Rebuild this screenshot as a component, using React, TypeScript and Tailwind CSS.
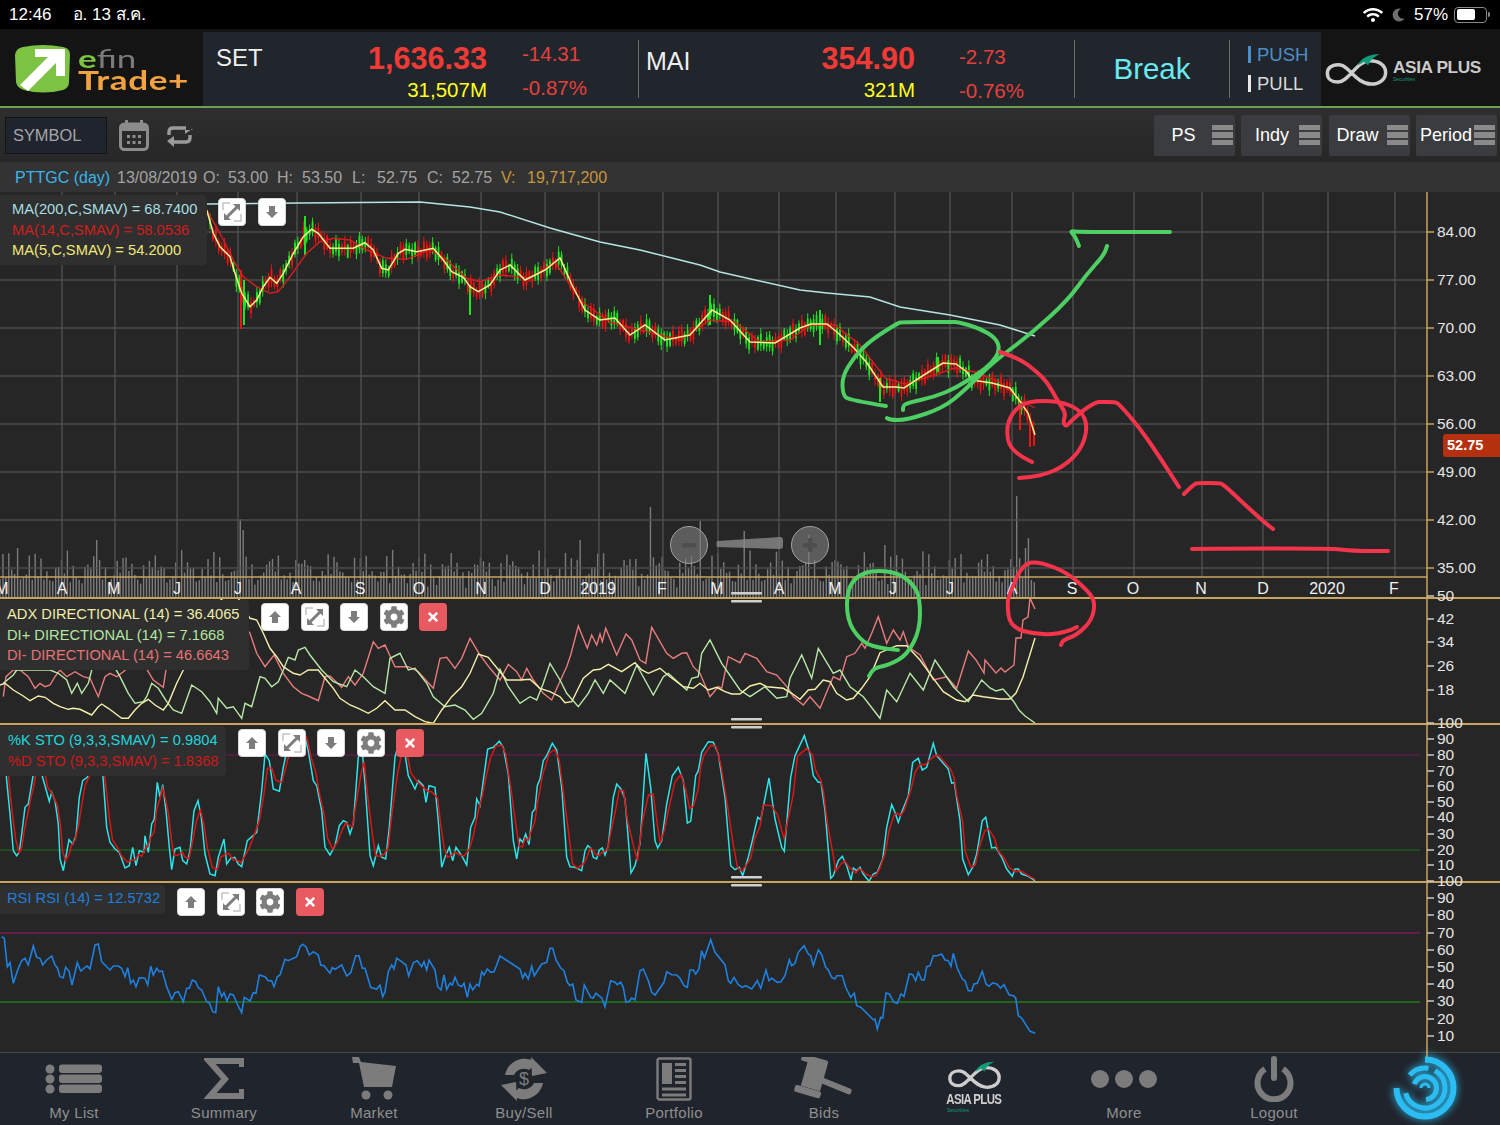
import { ReactNode } from "react";
import { FaCog, FaMoon, FaTimes, FaWifi } from "react-icons/fa";

type Pt = [number, number];

// chart data was read off zoomed crops, so each chunk carries its own origin/scale
const read = (s: string, ox: number, oy: number, sx = 3): Pt[] =>
  s
    .trim()
    .split(/\s+/)
    .map((p) => {
      const [x, y] = p.split(",").map(Number);
      return [x / sx + ox, y / 3 + oy] as Pt;
    });

const line = (pts: Pt[]) => pts.map((p) => p[0].toFixed(1) + "," + p[1].toFixed(1)).join(" ");

const smooth = (pts: Pt[]) => {
  let d = `M${pts[0][0]} ${pts[0][1]}`;
  for (let i = 1; i < pts.length - 1; i++) {
    const mx = (pts[i][0] + pts[i + 1][0]) / 2;
    const my = (pts[i][1] + pts[i + 1][1]) / 2;
    d += ` Q${pts[i][0]} ${pts[i][1]} ${mx} ${my}`;
  }
  const last = pts[pts.length - 1];
  return d + ` L${last[0]} ${last[1]}`;
};

const ma5: Pt[] = [
  ...read(
    "620,60 640,130 660,170 690,200 705,250 725,310 750,350 770,330 790,290 810,262 830,280 850,250 880,190 910,140 935,118 955,130 990,175 1030,175 1060,175 1095,158 1120,180 1145,235 1165,240 1195,190 1215,178 1250,185 1300,175 1330,210 1355,245 1390,262 1410,290 1435,305 1470,285 1500,240",
    0,
    190,
  ),
  [510, 265], [525, 280], [545, 270], [560, 258], [572, 285], [585, 310], [600, 320], [615, 318], [630, 335],
  [645, 325], [665, 340], [690, 335], [712, 310], [730, 320], [750, 342], [775, 343], [800, 328], [811, 324],
  [827, 324], [838, 333], [854, 348], [867, 363], [883, 387], [896, 387], [904, 388], [927, 373], [943, 363],
  [956, 364], [967, 372], [972, 380], [992, 383], [1010, 388], [1019, 400], [1028, 413], [1035, 435],
];

const ma14: Pt[] = [
  ...read(
    "620,60 660,130 700,210 730,260 770,290 810,310 835,305 870,260 920,190 960,155 1000,145 1050,150 1100,180 1160,205 1220,208 1290,178 1340,210 1400,265 1440,275 1500,255",
    0,
    190,
  ),
  [530, 278], [555, 262], [580, 300], [610, 322], [640, 330], [680, 340], [710, 320], [735, 322], [760, 342],
  [790, 340], [810, 325], [835, 325], [860, 345], [885, 378], [905, 384], [925, 378], [955, 368], [975, 372],
  [1000, 382], [1020, 400], [1035, 408],
];

const ma200: Pt[] = [
  [207, 204], [300, 203], [420, 202], [470, 207], [500, 212], [550, 228], [600, 242], [640, 250], [700, 265],
  [720, 272], [800, 290], [827, 293], [870, 297], [900, 307], [950, 315], [1000, 325], [1035, 336],
];

const adxCream: Pt[] = [
  ...read(
    "0,345 15,340 40,360 70,378 90,392 115,378 135,382 160,400 180,410 205,418 220,415 240,418 275,435 295,410 305,402 325,415 345,430 365,445 385,445 405,420 425,400 445,388 465,405 490,420 505,400 530,340 550,300 600,180 650,100 700,60 750,145 770,150 790,190 810,235 830,260 850,290 880,310 900,315 925,300 955,300 975,325 1000,355 1020,385 1050,405 1075,415 1105,430 1130,415 1155,392 1185,420 1215,420 1245,440 1275,455 1300,460 1325,420 1355,380 1385,350 1410,310 1435,252 1465,262",
    0,
    570,
  ),
  ...read(
    "0,575 20,600 60,600 90,598 120,625 150,635 180,650 195,668 215,665 250,595 280,570 300,568 325,553 365,575 405,548 425,570 445,580 480,565 510,590 550,620 580,625 600,610 625,630 650,622 675,635 695,642 720,642 750,618 780,610 800,620 850,625 875,640 900,658 925,630 945,628 970,600 990,605 1010,640 1040,660 1060,655 1085,625 1110,590 1140,518 1190,497 1220,497 1260,540 1300,595 1330,635 1370,660 1395,665 1420,645 1450,650 1500,657",
    500,
    480,
  ),
  [1010, 699], [1016, 693], [1023, 677], [1035, 638],
];

const adxPink: Pt[] = [
  ...read(
    "10,380 18,320 40,300 60,300 85,320 105,355 120,340 135,350 150,345 165,320 180,300 200,320 225,305 250,320 270,325 295,380 315,320 330,310 350,320 370,305 400,280 430,280 460,330 490,352 497,305 520,200 600,100 700,120 750,190 770,250 795,290 822,255 850,310 880,350 905,370 925,378 955,392 975,320 990,318 1025,352 1045,320 1065,345 1090,310 1120,215 1135,235 1155,225 1185,290 1225,290 1255,305 1300,355 1320,265 1340,262 1365,295 1385,265 1410,205 1440,255 1470,295",
    0,
    570,
  ),
  ...read(
    "0,600 25,553 50,575 65,600 80,565 100,600 130,640 155,660 175,615 200,560 212,525 235,438 262,505 275,465 290,495 300,462 307,485 317,445 350,525 378,462 395,480 420,540 437,550 455,442 500,520 520,535 545,520 560,518 580,560 600,580 630,650 655,620 665,625 685,530 720,548 735,520 770,535 800,575 830,585 865,625 880,650 910,675 930,650 960,685 985,625 1000,590 1020,600 1040,530 1065,520 1085,490 1095,505 1115,460 1135,410 1160,490 1180,450 1200,480 1210,455 1225,500 1260,525 1300,600 1340,590 1370,625 1405,513",
    500,
    480,
  ),
  [976, 660], [984, 673], [985, 660], [996, 673], [1001, 668], [1005, 672], [1014, 665], [1016, 638], [1021, 638],
  [1023, 620], [1028, 617], [1030, 598], [1035, 609],
];

const adxGreen: Pt[] = [
  ...read(
    "10,340 40,315 50,300 130,300 150,300 175,310 200,330 215,370 232,340 245,370 265,340 275,300 285,290 320,250 360,320 385,370 405,400 430,395 440,380 455,340 475,355 500,395 520,420 545,430 575,345 605,365 630,395 650,430 655,385 680,415 700,410 725,445 735,400 755,410 780,320 795,325 815,350 835,335 850,300 865,262 885,270 895,240 915,232 930,255 965,300 1000,335 1040,350 1065,300 1090,320 1120,350 1155,370 1170,265 1200,250 1225,300 1245,295 1280,340 1300,380 1335,410 1365,405 1395,420 1420,448 1445,430 1480,370",
    0,
    570,
  ),
  ...read(
    "0,568 25,620 60,670 90,650 110,660 130,610 150,550 180,600 200,640 235,680 265,640 285,600 310,640 330,600 375,640 410,555 460,645 490,590 505,580 560,630 575,595 595,590 605,520 630,480 665,550 720,630 750,650 795,620 830,655 860,650 870,595 905,525 935,595 955,505 1000,580 1020,570 1050,620 1090,650 1140,715 1160,630 1190,665 1230,580 1270,630 1305,540 1360,620 1405,665 1445,600",
    500,
    480,
  ),
  [990, 688], [996, 691], [1003, 689], [1010, 697], [1014, 702], [1019, 710], [1025, 716], [1035, 723],
];

const stoK: Pt[] = [
  ...read(
    "0,60 15,100 20,170 30,270 40,380 50,395 58,385 65,330 75,250 85,240 95,180 105,120 112,60 118,60 125,150 135,185 148,232 155,205 165,230 175,300 180,405 190,440 200,385 207,347 218,360 228,335 238,220 248,170 262,160 275,130 285,80 300,70 310,170 320,310 330,355 345,375 358,385 375,432 388,425 398,370 408,425 418,380 432,385 435,335 445,385 455,300 463,285 472,175 480,220 488,182 498,260 508,370 515,437 525,375 540,370 548,410 560,420 570,380 582,260 594,230 604,280 615,390 630,450 645,455 655,400 672,345 680,420 692,403 704,400 715,420 725,428 742,350 770,325 785,200 795,90 808,110 820,195 838,202 850,130 865,60 885,20 905,20 915,40 925,80 940,170 950,185 965,260 975,370 990,393 1005,365 1018,305 1030,290 1040,295 1050,330 1060,300 1075,100 1085,60 1095,180 1110,395 1120,425 1135,365 1145,400 1157,405 1168,310 1185,100 1200,40 1215,90 1225,155 1245,195 1255,170 1270,185 1278,235 1287,185 1305,190 1315,290 1325,430 1335,400 1348,370 1358,410 1368,370 1385,395 1400,423 1412,310 1425,280 1430,225 1440,245 1450,170 1463,75 1480,70 1498,52 1510,70 1525,150 1540,350 1550,405",
    0,
    724,
  ),
  ...read(
    "0,345 8,355 17,330 27,362 37,265 45,255 52,185 60,165 70,110 80,95 97,58 110,78 125,190 140,400 150,428 165,430 185,440 195,380 203,365 213,373 220,400 230,405 238,378 247,372 255,393 265,365 280,220 290,180 303,195 315,225 333,447 345,425 360,360 378,88 392,190 405,350 413,372 425,350 440,240 457,155 475,130 490,170 502,297 512,292 527,155 535,140 545,85 565,53 580,55 595,90 615,220 632,425 645,437 658,430 668,455 685,400 697,350 713,280 722,287 747,162 765,285 785,370 793,382 812,160 825,95 853,35 870,90 880,155 895,175 903,175 915,260 932,463 940,455 955,410 967,397 980,425 993,468 1000,432 1010,440 1020,430 1030,450 1047,472 1060,450 1072,445 1088,405 1100,310 1115,242 1125,265 1135,295 1145,265 1165,215 1178,115 1195,103 1207,138 1220,130 1240,58 1250,95 1285,135 1295,178 1303,175 1320,290 1328,405 1345,452 1358,430 1370,390 1387,290 1397,280 1415,372 1427,370 1445,400 1460,435 1477,457 1485,435 1495,435 1505,450 1525,457 1545,470",
    520,
    724,
  ),
];

// %D is just %K lagged and averaged
const stoD: Pt[] = stoK.map((p, i) => {
  const a = stoK[Math.max(0, i - 1)];
  const b = stoK[Math.min(stoK.length - 1, i + 1)];
  return [Math.min(p[0] + 2.5, 1035), (a[1] + p[1] + b[1]) / 3] as Pt;
});

const rsi: Pt[] = [
  ...read(
    "5,200 13,205 22,290 30,278 40,340 55,295 65,272 75,265 85,285 100,228 110,262 120,265 128,285 140,270 155,258 165,285 172,293 180,320 190,323 197,292 207,303 216,345 232,278 242,303 255,292 262,288 270,297 285,225 295,222 305,275 330,300 340,288 355,288 365,295 375,320 383,293 392,340 400,330 408,350 418,323 435,325 443,345 452,288 460,315 470,295 478,305 487,303 500,350 515,388 525,368 535,365 550,395 560,355 568,355 577,330 587,335 595,353 605,360 620,395 628,398 638,425 647,428 655,350 665,380 672,368 681,393 690,372 700,375 713,405 725,428 733,382 750,393 760,368 768,370 778,315 795,320 805,332 815,332 822,350 832,320 840,315 855,268 865,272 890,260 900,230 908,223 918,230 928,255 940,245 955,255 962,285 972,287 990,310 997,293 1005,298 1025,285 1040,318 1052,308 1067,257 1077,257 1087,295 1095,295 1112,352 1130,358 1140,345 1148,380 1155,365 1165,305 1175,285 1182,297 1190,265 1205,275 1218,285 1226,318 1240,278 1252,272 1265,290 1272,275 1280,300 1287,270 1305,300 1313,350 1323,360 1332,315 1340,358 1350,340 1357,345 1365,322 1375,345 1385,350 1392,340 1402,382 1410,342 1418,360 1430,343 1437,348 1445,305 1452,315 1462,297 1472,307 1482,305 1490,285 1500,258",
    0,
    870,
  ),
  ...read(
    "0,735 8,762 15,748 25,765 35,727 43,755 65,720 80,715 90,673 98,673 108,708 122,732 132,740 142,775 150,785 158,780 168,828 185,835 193,783 212,820 220,822 228,808 245,822 255,848 272,770 285,775 292,782 302,775 310,790 318,835 328,832 335,822 345,828 360,740 370,735 385,770 395,805 405,813 432,775 440,743 455,752 470,753 480,763 492,785 502,790 510,738 520,738 527,750 537,735 545,680 553,702 572,647 585,685 615,722 625,770 632,778 642,760 655,782 667,790 677,785 695,795 712,770 722,793 738,738 747,770 755,762 772,775 783,773 795,755 808,707 815,725 825,718 835,685 852,665 865,690 872,695 880,725 895,677 905,692 917,730 925,738 935,760 945,765 950,755 967,755 977,790 992,820 1003,808 1010,845 1022,850 1060,887 1065,885 1072,915 1082,880 1088,882 1098,807 1108,810 1122,835 1132,838 1143,810 1152,817 1168,750 1178,752 1187,770 1195,745 1205,768 1213,768 1220,728 1230,725 1240,695 1252,695 1265,690 1275,708 1285,710 1293,727 1300,688 1312,733 1327,765 1335,770 1345,800 1355,800 1362,780 1372,778 1387,742 1398,780 1407,787 1418,777 1430,780 1442,792 1452,782 1467,812 1480,815 1487,822 1495,875 1505,882 1530,922 1546,928",
    520,
    724,
  ),
];

const gridX = [62, 115, 177, 238, 297, 361, 419, 481, 545, 599, 663, 718, 779, 836, 895, 950, 1012, 1073, 1134, 1202, 1263, 1328, 1395];
const gridY = [232, 280, 328, 376, 424, 472, 520, 568];

const months: [string, number][] = [
  ["M", 2], ["A", 62], ["M", 114], ["J", 177], ["J", 238], ["A", 296], ["S", 360], ["O", 419], ["N", 481], ["D", 545],
  ["2019", 598], ["F", 662], ["M", 717], ["A", 779], ["M", 835], ["J", 893], ["J", 950], ["A", 1012], ["S", 1072],
  ["O", 1133], ["N", 1201], ["D", 1263], ["2020", 1327], ["F", 1394],
];

const axis: [string, number][] = [
  ["84.00", 232], ["77.00", 280], ["70.00", 328], ["63.00", 376], ["56.00", 424], ["49.00", 472], ["42.00", 520], ["35.00", 568],
  ["50", 596], ["42", 619], ["34", 642], ["26", 666], ["18", 690], ["100", 723],
  ["90", 739], ["80", 755], ["70", 771], ["60", 786], ["50", 802], ["40", 817], ["30", 834], ["20", 850], ["10", 865], ["100", 881],
  ["90", 898], ["80", 915], ["70", 933], ["60", 950], ["50", 967], ["40", 984], ["30", 1001], ["20", 1019], ["10", 1036],
];

const green: Pt[][] = [
  [[1079, 246], [1076, 238], [1072, 233], [1071, 231], [1077, 232], [1170, 232]],
  [[886, 406], [849, 400], [843, 395], [842, 377], [854, 357], [871, 340], [898, 323], [902, 322], [952, 322], [958, 322], [979, 328], [996, 338], [1000, 350], [992, 363], [979, 373], [956, 388], [934, 397], [907, 403], [903, 406], [903, 410]],
  [[887, 418], [889, 420], [907, 420], [943, 408], [965, 390], [992, 363], [1032, 333], [1068, 300], [1086, 275], [1104, 255], [1107, 246]],
  [[898, 650], [876, 648], [860, 640], [847, 620], [847, 590], [858, 575], [876, 570], [898, 573], [912, 583], [920, 597], [920, 630], [907, 655], [889, 665], [874, 668], [869, 676]],
];

const red: Pt[][] = [
  [[1000, 352], [1019, 358], [1037, 372], [1048, 383], [1057, 400], [1066, 413], [1063, 422], [1066, 427], [1072, 420], [1086, 408], [1097, 402], [1101, 402], [1115, 402], [1119, 404], [1139, 427], [1157, 453], [1179, 487]],
  [[1032, 462], [1010, 452], [1006, 427], [1014, 410], [1028, 401], [1059, 401], [1081, 410], [1088, 427], [1081, 450], [1063, 467], [1041, 476], [1019, 478]],
  [[1184, 494], [1194, 484], [1198, 483], [1218, 483], [1223, 484], [1242, 502], [1264, 522], [1273, 529]],
  [[1192, 549], [1327, 548], [1354, 551], [1388, 551]],
  [[1077, 627], [1066, 633], [1037, 635], [1010, 627], [1007, 603], [1010, 593], [1023, 563], [1041, 562], [1068, 573], [1090, 593], [1095, 603], [1092, 620], [1077, 635], [1063, 640], [1061, 645]],
];

const yAt = (pts: Pt[], x: number) => {
  for (let i = 1; i < pts.length; i++) {
    if (x <= pts[i][0]) {
      const t = (x - pts[i - 1][0]) / (pts[i][0] - pts[i - 1][0] || 1);
      return pts[i - 1][1] + t * (pts[i][1] - pts[i - 1][1]);
    }
  }
  return pts[pts.length - 1][1];
};

function Candles() {
  const out: ReactNode[] = [];
  let i = 0;
  for (let x = 210; x <= 1035; x += 2.93, i++) {
    const mid = yAt(ma5, x) + 3 * Math.sin(i * 2.3);
    const up = Math.sin(i * 1.1 + Math.cos(i * 0.37) * 2) > (x > 860 ? 0.55 : x < 238 ? 0.5 : -0.1);
    const len = 2.5 + 4 * Math.abs(Math.sin(i * 0.83));
    const wick = 1 + 4.5 * Math.abs(Math.cos(i * 1.37));
    const c = up ? "#1ee61e" : "#ee1212";
    out.push(
      <g key={i}>
        <line x1={x} x2={x} y1={mid - len - wick} y2={mid + len + wick} stroke={c} strokeWidth="1" />
        <rect x={x - 0.9} y={mid - len} width="1.8" height={len * 2} fill={c} />
      </g>,
    );
  }
  const spikes: [number, number, number, string][] = [
    [241, 270, 329, "#ee1212"], [244, 280, 325, "#1ee61e"], [470, 285, 315, "#1ee61e"], [305, 216, 255, "#1ee61e"],
    [710, 295, 325, "#1ee61e"], [820, 310, 345, "#1ee61e"], [880, 378, 402, "#1ee61e"], [938, 357, 372, "#1ee61e"],
    [1020, 400, 430, "#ee1212"], [1030, 420, 447, "#ee1212"], [1034, 430, 446, "#ee1212"],
  ];
  return (
    <>
      {out}
      {spikes.map(([x, a, b, c]) => (
        <line key={x} x1={x} x2={x} y1={a} y2={b} stroke={c} strokeWidth="2" />
      ))}
    </>
  );
}

function Volume() {
  const out: ReactNode[] = [];
  const spikes: Record<number, number> = { 6: 548, 33: 540, 82: 519, 83: 530, 198: 540, 222: 507, 239: 521, 254: 531, 302: 545, 347: 496, 350: 548, 351: 538, 276: 535 };
  for (let i = 0; i < 354; i++) {
    const h = 10 + 30 * Math.abs(Math.sin(i * 1.7) * Math.sin(i * 0.31 + 1)) + 9 * Math.abs(Math.cos(i * 4.1));
    const top = spikes[i] ?? 598 - h;
    out.push(<line key={i} x1={i * 2.93} x2={i * 2.93} y1={top} y2={598} stroke="#a0a0a0" strokeWidth="1.4" opacity="0.7" />);
  }
  return <>{out}</>;
}

function IconFrame({ children, className }: { children: ReactNode; className?: string }) {
  return (
    <div className={"w-[28px] h-[28px] rounded-[4px] border border-[#d8d8d8] bg-white flex items-center justify-center text-[#7d7d7d] " + (className ?? "")}>
      {children}
    </div>
  );
}

const UpBtn = () => (
  <IconFrame>
    <svg width="14" height="14" viewBox="0 0 14 14" fill="#7d7d7d">
      <path d="M7 1 L13 7 H10 V13 H4 V7 H1 Z" />
    </svg>
  </IconFrame>
);
const DownBtn = () => (
  <IconFrame>
    <svg width="14" height="14" viewBox="0 0 14 14" fill="#7d7d7d">
      <path d="M7 13 L1 7 H4 V1 H10 V7 H13 Z" />
    </svg>
  </IconFrame>
);
const ExpandBtn = () => (
  <IconFrame>
    <svg width="24" height="24" viewBox="0 0 24 24" fill="none">
      <path d="M3 10 V3 H10 M21 14 V21 H14" stroke="#c4c4c4" strokeWidth="1.5" />
      <path d="M6 18 L18 6" stroke="#7d7d7d" strokeWidth="3" />
      <path d="M13 4 H20 V11 Z M4 13 V20 H11 Z" fill="#7d7d7d" />
    </svg>
  </IconFrame>
);
const GearBtn = () => (
  <IconFrame>
    <FaCog className="w-[22px] h-[22px]" />
  </IconFrame>
);
const CloseBtn = () => (
  <div className="w-[28px] h-[28px] rounded-[4px] bg-[#e85a60] flex items-center justify-center text-white">
    <FaTimes className="w-[14px] h-[14px]" />
  </div>
);

function Legend({ className, rows }: { className: string; rows: [string, string][] }) {
  return (
    <div className={"absolute left-0 rounded-r-[4px] bg-[#2f2f2f] flex flex-col pl-[7px] " + className}>
      {rows.map(([t, c]) => (
        <div key={t} className="text-[14.7px] h-[20.5px] leading-[20.5px] whitespace-nowrap" style={{ color: c }}>
          {t}
        </div>
      ))}
    </div>
  );
}

function Hamburger() {
  return (
    <div className="flex flex-col gap-[2px] w-[21px]">
      <div className="h-[5px] bg-[#8a8a8a]" />
      <div className="h-[6px] bg-[#8a8a8a]" />
      <div className="h-[5px] bg-[#8a8a8a]" />
    </div>
  );
}

function ToolButton({ label, pad }: { label: string; pad: string }) {
  return (
    <div className="w-[81px] h-[41px] rounded-[2px] bg-[#3a3c3f] flex items-center justify-end pr-[2px]">
      <span className={"text-[18px] text-white " + pad}>{label}</span>
      <Hamburger />
    </div>
  );
}

function AsiaMark({ className, w }: { className: string; w: string }) {
  return (
    <svg viewBox="0 0 64 34" fill="none" className={className}>
      <path
        d="M13 12 C6 12 2 16 2 21 C2 27 7 30 13 30 C24 30 32 8 46 8 C56 8 62 13 62 20 C62 27 56 32 47 32 C36 32 28 21 22 16 C19 13 16 12 13 12 Z"
        stroke="#cdcdcd"
        strokeWidth={w}
      />
      <path d="M33 13 C37 5 45 1 56 1 C50 4 46 7 44 13 L40 9 Z" fill="#0f9b78" />
    </svg>
  );
}

function Tab({ label, children }: { label: string; children: ReactNode }) {
  return (
    <div className="w-[150px] flex flex-col items-center">
      <div className="h-[51px] flex items-center justify-center">{children}</div>
      <div className="text-[15px] leading-[18px] text-[#8f8f8f] tracking-[0.3px]">{label}</div>
    </div>
  );
}

function Arc({ r, from, to, w }: { r: number; from: number; to: number; w: number }) {
  const p = (a: number) => [32 + r * Math.sin((a * Math.PI) / 180), 32 - r * Math.cos((a * Math.PI) / 180)];
  const [x1, y1] = p(from);
  const [x2, y2] = p(to);
  return <path d={`M${x1} ${y1} A${r} ${r} 0 ${to - from > 180 ? 1 : 0} 1 ${x2} ${y2}`} stroke="#2bbdf2" strokeWidth={w} fill="none" />;
}

export default function App() {
  return (
    <div className="w-[1500px] h-[1125px] overflow-hidden flex flex-col bg-[#262626] font-['Liberation_Sans','Noto_Sans',sans-serif]">
      {/* status bar */}
      <div className="h-[29px] bg-black text-white text-[17px] flex items-center pl-[9px] pr-[10px]">
        <span>12:46</span>
        <span className="ml-[21px]">อ. 13 ส.ค.</span>
        <div className="ml-auto flex items-center">
          <FaWifi className="w-[20px] h-[16px]" />
          <FaMoon className="ml-[9px] w-[13px] h-[14px] text-[#6f6f6f]" />
          <span className="ml-[9px]">57%</span>
          <div className="ml-[6px] w-[33px] h-[16px] rounded-[4px] border border-[#8a8a8a] p-[1.5px]">
            <div className="w-[18px] h-full rounded-[2px] bg-white" />
          </div>
          <div className="ml-[1px] w-[2px] h-[5px] rounded-r bg-[#8a8a8a]" />
        </div>
      </div>

      {/* index header */}
      <div className="h-[79px] bg-[#141414] flex border-b-2 border-[#6f9f55] pt-[3px]">
        <div className="w-[203px] flex items-center pl-[15px]">
          <svg width="56" height="50" viewBox="0 0 56 50" className="shrink-0">
            <path d="M8 3 Q28 -1 48 3 Q55 4 55 11 L54 38 Q54 44 48 46 Q28 51 9 46 Q2 44 1 38 L0 11 Q1 4 8 3 Z" fill="#7cc243" />
            <path d="M20 5 H50 V32 H41 V19 L13 47 L5 41 L33 13 H20 Z" fill="#fff" />
          </svg>
          <div className="ml-[7px] flex flex-col font-['Lato',sans-serif]">
            <div className="text-[25px] h-[22px] leading-[22px] origin-left scale-x-[1.4]">
              <span className="text-[#7cc243] font-bold">e</span>
              <span className="text-[#7b7b7b]">fin</span>
            </div>
            <div className="text-[27px] h-[22px] leading-[22px] font-bold tracking-[0.5px] text-[#f2a340] whitespace-nowrap origin-left scale-x-[1.3]">Trade+</div>
          </div>
        </div>

        <div className="w-[1118px] bg-[#21252c] flex items-center">
          <div className="w-[436px] h-[58px] flex border-r border-[#6d6d6d] pl-[13px]">
            <div className="w-[100px] text-[24px] text-[#eeeeee] leading-[36px]">SET</div>
            <div className="w-[171px] flex flex-col items-end">
              <div className="text-[30.6px] leading-[36px] font-bold text-[#f03a36]">1,636.33</div>
              <div className="mt-[2px] text-[20.5px] leading-[24px] text-[#ffff1e]">31,507M</div>
            </div>
            <div className="ml-[35px] flex flex-col text-[20.5px] text-[#e5403c]">
              <div className="leading-[28px]">-14.31</div>
              <div className="mt-[6px] leading-[28px]">-0.87%</div>
            </div>
          </div>
          <div className="w-[436px] h-[58px] flex border-r border-[#6d6d6d] pl-[7px]">
            <div className="w-[100px] text-[25px] text-[#eeeeee] leading-[42px]">MAI</div>
            <div className="w-[169px] flex flex-col items-end">
              <div className="text-[30.6px] leading-[36px] font-bold text-[#f03a36]">354.90</div>
              <div className="mt-[2px] text-[20.5px] leading-[24px] text-[#ffff1e]">321M</div>
            </div>
            <div className="ml-[44px] flex flex-col text-[20.5px] text-[#e5403c]">
              <div className="leading-[34px]">-2.73</div>
              <div className="leading-[34px]">-0.76%</div>
            </div>
          </div>
          <div className="w-[155px] h-[58px] flex items-center justify-center border-r border-[#6d6d6d] text-[29.5px] leading-[56px] text-[#69eaf0]">Break</div>
          <div className="pl-[18px] flex flex-col text-[18.5px]">
            <div className="flex items-center h-[29px] text-[#4c8ec8]">
              <div className="w-[3px] h-[17px] bg-[#4c8ec8] mr-[6px]" />
              PUSH
            </div>
            <div className="flex items-center h-[29px] text-[#d8d8d8]">
              <div className="w-[3px] h-[17px] bg-[#e8e8e8] mr-[6px]" />
              PULL
            </div>
          </div>
        </div>

        <div className="flex-1 flex items-center pl-[4px]">
          <AsiaMark className="w-[63px] h-[33px] shrink-0" w="3.6" />
          <div className="ml-[5px] flex flex-col mt-[2px]">
            <span className="text-[17.3px] leading-[18px] font-bold text-[#c9c9c9] -tracking-[0.4px] whitespace-nowrap">ASIA PLUS</span>
            <span className="text-[5px] leading-[6px] text-[#0f9b78]">Securities</span>
          </div>
        </div>
      </div>

      {/* toolbar */}
      <div className="h-[54px] bg-linear-to-b from-[#2e2e2e] to-[#272727] flex items-center pl-[5px] pr-[3px]">
        <div className="w-[102px] h-[37px] bg-[#20242e] border border-[#141414] flex items-center pl-[7px] text-[16.4px] text-[#a6a6a6]">SYMBOL</div>
        <svg width="30" height="31" viewBox="0 0 30 31" className="ml-[12px]" fill="none">
          <rect x="1.5" y="4" width="27" height="25.5" rx="4" stroke="#8c8c8c" strokeWidth="3" />
          <rect x="1.5" y="4" width="27" height="7" rx="3" fill="#8c8c8c" />
          <rect x="6" y="0" width="3" height="6" fill="#8c8c8c" />
          <rect x="21" y="0" width="3" height="6" fill="#8c8c8c" />
          <path d="M8 15h3v3H8zM13.5 15h3v3h-3zM19 15h3v3h-3zM8 21h3v3H8zM13.5 21h3v3h-3zM19 21h3v3h-3z" fill="#8c8c8c" />
        </svg>
        <svg width="27" height="24" viewBox="0 0 27 24" className="ml-[17px]" fill="none">
          <path d="M3 12 V9 Q3 5 7 5 H20" stroke="#9a9a9a" strokeWidth="3.4" />
          <path d="M19 0 L27 7 H19 Z M19 0 V11 L26 6 Z" fill="#9a9a9a" />
          <path d="M24 12 V15 Q24 19 20 19 H7" stroke="#9a9a9a" strokeWidth="3.4" />
          <path d="M8 13 V24 L1 18 Z" fill="#9a9a9a" />
        </svg>
        <div className="ml-auto flex gap-[6.5px]">
          <ToolButton label="PS" pad="mr-[16px]" />
          <ToolButton label="Indy" pad="mr-[10px]" />
          <ToolButton label="Draw" pad="mr-[8px]" />
          <ToolButton label="Period" pad="mr-[2px]" />
        </div>
      </div>

      {/* quote line */}
      <div className="h-[30px] bg-[#333333] flex items-center pl-[15px] pt-[2px] text-[16px] text-[#a3a3a3] whitespace-nowrap">
        <span className="w-[102px] text-[#38b6ea]">PTTGC (day)</span>
        <span className="w-[86px]">13/08/2019</span>
        <span className="w-[25px]">O:</span>
        <span className="w-[49px]">53.00</span>
        <span className="w-[25px]">H:</span>
        <span className="w-[50px]">53.50</span>
        <span className="w-[25px]">L:</span>
        <span className="w-[50px]">52.75</span>
        <span className="w-[25px]">C:</span>
        <span className="w-[49px]">52.75</span>
        <span className="w-[26px] text-[#c9953c]">V:</span>
        <span className="text-[#c9953c]">19,717,200</span>
      </div>

      {/* chart stack */}
      <div className="relative flex-1 flex flex-col min-h-0">
        <div className="relative h-[407px] shrink-0 border-b-2 border-[#c9a55c]">
          <svg width="1500" height="405" viewBox="0 192 1500 405" className="block">
            <Volume />
            {gridX.map((x) => (
              <line key={x} x1={x} x2={x} y1={192} y2={577} stroke="#4d4d4d" strokeWidth="1.5" />
            ))}
            {gridY.map((y) => (
              <line key={y} x1={0} x2={1427} y1={y} y2={y} stroke="#4d4d4d" strokeWidth="1.5" />
            ))}
            <line x1={0} x2={1427} y1={577} y2={577} stroke="#c9a55c" strokeWidth="1.5" />
            <Candles />
            <polyline points={line(ma200)} fill="none" stroke="#b5e4e2" strokeWidth="1.5" />
            <polyline points={line(ma14)} fill="none" stroke="#d91c1c" strokeWidth="1.4" />
            <polyline points={line(ma5)} fill="none" stroke="#f8ee8a" strokeWidth="1.5" />
          </svg>
          <Legend
            className="top-[3px] w-[207px] h-[70px] pt-[4px] pl-[12px]"
            rows={[
              ["MA(200,C,SMAV) = 68.7400", "#a8dfe0"],
              ["MA(14,C,SMAV) = 58.0536", "#cf1d1d"],
              ["MA(5,C,SMAV) = 54.2000", "#efe878"],
            ]}
          />
          <div className="absolute top-[6px] left-[218px] flex gap-[12px]">
            <ExpandBtn />
            <DownBtn />
          </div>
        </div>

        <div className="relative h-[126px] shrink-0 border-b-2 border-[#c9a55c]">
          <svg width="1500" height="124" viewBox="0 599 1500 124" className="block">
            <polyline points={line(adxPink)} fill="none" stroke="#e87c7c" strokeWidth="1.4" />
            <polyline points={line(adxGreen)} fill="none" stroke="#b8e8a8" strokeWidth="1.4" />
            <polyline points={line(adxCream)} fill="none" stroke="#f5f0ac" strokeWidth="1.4" />
          </svg>
          <Legend
            className="top-[1px] w-[249px] h-[70px] pt-[4px]"
            rows={[
              ["ADX DIRECTIONAL (14) = 36.4065", "#efeca8"],
              ["DI+ DIRECTIONAL (14) = 7.1668", "#b2e6a2"],
              ["DI- DIRECTIONAL (14) = 46.6643", "#e57474"],
            ]}
          />
          <div className="absolute top-[4px] left-[261px] flex gap-[11.5px]">
            <UpBtn />
            <ExpandBtn />
            <DownBtn />
            <GearBtn />
            <CloseBtn />
          </div>
        </div>

        <div className="relative h-[158px] shrink-0 border-b-2 border-[#c9a55c]">
          <svg width="1500" height="156" viewBox="0 725 1500 156" className="block">
            <line x1={0} x2={1420} y1={755} y2={755} stroke="#5a1d49" strokeWidth="1.3" />
            <line x1={0} x2={1420} y1={850} y2={850} stroke="#1f5a1f" strokeWidth="1.3" />
            <polyline points={line(stoK)} fill="none" stroke="#2ce4ea" strokeWidth="1.5" />
            <polyline points={line(stoD)} fill="none" stroke="#dd1414" strokeWidth="1.5" />
          </svg>
          <Legend
            className="top-[1px] w-[226px] h-[50px] pt-[4px] pl-[8px]"
            rows={[
              ["%K STO (9,3,3,SMAV) = 0.9804", "#1fd6de"],
              ["%D STO (9,3,3,SMAV) = 1.8368", "#cf1818"],
            ]}
          />
          <div className="absolute top-[4px] left-[238px] flex gap-[11.5px]">
            <UpBtn />
            <ExpandBtn />
            <DownBtn />
            <GearBtn />
            <CloseBtn />
          </div>
        </div>

        <div className="relative flex-1">
          <svg width="1500" height="169" viewBox="0 883 1500 169" className="block">
            <line x1={0} x2={1420} y1={933} y2={933} stroke="#7a1c55" strokeWidth="1.3" />
            <line x1={0} x2={1420} y1={1002} y2={1002} stroke="#1f7a1f" strokeWidth="1.3" />
            <polyline points={line(rsi)} fill="none" stroke="#1e80e0" strokeWidth="1.6" />
          </svg>
          <Legend className="top-[2px] w-[165px] h-[29px] pt-[3px]" rows={[["RSI RSI (14) = 12.5732", "#1f7fdc"]]} />
          <div className="absolute top-[5px] left-[177px] flex gap-[11.5px]">
            <UpBtn />
            <ExpandBtn />
            <GearBtn />
            <CloseBtn />
          </div>
        </div>

        {/* axis labels, zoom widget and the finger drawing lie over all the panels */}
        <svg viewBox="0 192 1500 860" className="absolute inset-0 w-full h-full pointer-events-none">
          <line x1={1427} x2={1427} y1={192} y2={1052} stroke="#c9a55c" strokeWidth="1.5" />
          {axis.map(([t, y], i) => (
            <g key={i}>
              <line x1={1427} x2={1434} y1={y} y2={y} stroke={y < 590 ? "#c9a55c" : "#c8c8c8"} strokeWidth="1.5" />
              <text x={1437} y={y + 4.5} fontSize="15.5" fill="#e4e4e4">
                {t}
              </text>
            </g>
          ))}
          {months.map(([t, x], i) => (
            <text key={i} x={x} y={593.5} fontSize="16" fill="#f0f0f0" textAnchor="middle">
              {t}
            </text>
          ))}
          {[593, 601, 719, 727, 877, 885].map((y) => (
            <rect key={y} x={731} y={y - 1} width={31} height={2.5} rx={1} fill="#cfcfcf" />
          ))}
          <g>
            <circle cx={689} cy={545} r={18.5} fill="#7a7a7a" fillOpacity="0.65" stroke="#a0a0a0" strokeWidth="1" />
            <rect x={682} y={543} width={14} height={4.5} rx={1} fill="#4e4e4e" />
            <path d="M717 541 L780 537 Q783 537 783 540 V546 Q783 549 780 549 L717 547 Q716 544 717 541 Z" fill="#8a8a8a" fillOpacity="0.8" />
            <circle cx={810} cy={545} r={18.5} fill="#7a7a7a" fillOpacity="0.65" stroke="#a0a0a0" strokeWidth="1" />
            <rect x={803} y={543} width={14} height={4.5} rx={1} fill="#4e4e4e" />
            <rect x={808} y={538} width={4.5} height={14} rx={1} fill="#4e4e4e" />
          </g>
          {green.map((p, i) => (
            <path key={i} d={smooth(p)} fill="none" stroke="#4ecf63" strokeWidth="4" strokeLinecap="round" strokeLinejoin="round" />
          ))}
          {red.map((p, i) => (
            <path key={i} d={smooth(p)} fill="none" stroke="#f5344c" strokeWidth="4" strokeLinecap="round" strokeLinejoin="round" />
          ))}
        </svg>

        <div className="absolute top-[242px] right-0 w-[57px] h-[23px] rounded-l-[3px] bg-[#b4300f] flex items-center pl-[4px] text-[14.5px] font-bold text-white">52.75</div>
      </div>

      {/* bottom tabs */}
      <div className="h-[73px] shrink-0 bg-[#20242c] border-t border-[#474747] flex -ml-[1px]">
        <Tab label="My List">
          <svg width="58" height="30" viewBox="0 0 58 30" fill="#7c7c7c">
            <circle cx="5" cy="5" r="4.5" />
            <circle cx="5" cy="15" r="4.5" />
            <circle cx="5" cy="25" r="4.5" />
            <rect x="14" y="0.5" width="43" height="8.5" rx="3" />
            <rect x="14" y="10.5" width="43" height="8.5" rx="3" />
            <rect x="14" y="20.5" width="43" height="8.5" rx="3" />
          </svg>
        </Tab>
        <Tab label="Summary">
          <svg width="40" height="42" viewBox="0 0 40 42" fill="none" stroke="#7c7c7c">
            <path d="M38 9 V3 H5 L21 21 L6 38 H38 V31" strokeWidth="6" />
          </svg>
        </Tab>
        <Tab label="Market">
          <svg width="46" height="44" viewBox="0 0 46 44" fill="#7c7c7c">
            <path d="M1 0 H8 L10 5 L45 9 L41 30 H13 L8 6 H2 Z" />
            <circle cx="15" cy="38" r="4.5" />
            <circle cx="37" cy="38" r="4.5" />
          </svg>
        </Tab>
        <Tab label="Buy/Sell">
          <svg width="50" height="44" viewBox="0 0 50 44" fill="none">
            <path d="M6 18 A20 20 0 0 1 38 6 L30 13 A11 11 0 0 0 15 18 Z" fill="#7c7c7c" />
            <path d="M32 0 L48 16 L33 19 Z" fill="#7c7c7c" />
            <path d="M44 26 A20 20 0 0 1 12 38 L20 31 A11 11 0 0 0 35 26 Z" fill="#7c7c7c" />
            <path d="M18 44 L2 28 L17 25 Z" fill="#7c7c7c" />
            <text x="25" y="28" fontSize="18" textAnchor="middle" fill="#7c7c7c">
              $
            </text>
          </svg>
        </Tab>
        <Tab label="Portfolio">
          <svg width="36" height="44" viewBox="0 0 36 44" fill="none">
            <rect x="1.5" y="1.5" width="33" height="41" rx="2" stroke="#7c7c7c" strokeWidth="2.4" />
            <rect x="6" y="6" width="10" height="21" fill="#7c7c7c" />
            <path d="M19 7.5H30M19 13.5H30M19 19.5H30M19 25.5H30M6 32H30M6 38H30" stroke="#7c7c7c" strokeWidth="3" />
          </svg>
        </Tab>
        <Tab label="Bids">
          <svg width="62" height="44" viewBox="0 0 62 44" fill="#7c7c7c">
            <rect x="11" y="6" width="20" height="26" transform="rotate(16 21 19)" />
            <rect x="8" y="0" width="27" height="7" rx="2" transform="rotate(16 21 4)" />
            <rect x="1" y="31" width="27" height="7" rx="2" transform="rotate(16 14 35)" />
            <rect x="26" y="19" width="36" height="6" rx="2" transform="rotate(22 26 19)" />
          </svg>
        </Tab>
        <div className="w-[150px] flex flex-col items-center pt-[8px]">
          <AsiaMark className="w-[53px] h-[28px]" w="4" />
          <span className="mt-[2px] text-[14.5px] leading-[16px] font-bold text-[#d0d0d0] -tracking-[0.8px] whitespace-nowrap scale-x-[0.79]">ASIA PLUS</span>
          <span className="self-start ml-[48px] text-[5px] leading-[6px] text-[#0f9b78]">Securities</span>
        </div>
        <Tab label="More">
          <svg width="66" height="20" viewBox="0 0 66 20" fill="#7c7c7c">
            <circle cx="9" cy="10" r="9" />
            <circle cx="33" cy="10" r="9" />
            <circle cx="57" cy="10" r="9" />
          </svg>
        </Tab>
        <Tab label="Logout">
          <svg width="40" height="46" viewBox="0 0 40 46" fill="none" stroke="#7c7c7c">
            <path d="M11 13 A16.5 16.5 0 1 0 29 13" strokeWidth="6" />
            <path d="M20 3 V22" strokeWidth="6" strokeLinecap="round" />
          </svg>
        </Tab>
        <div className="w-[150px] flex justify-center pt-[3px] pl-[1px]">
          <svg width="64" height="64" viewBox="0 0 64 64" className="overflow-visible drop-shadow-[0_0_4px_#2bbdf2]">
            <line x1="34" x2="34" y1="-5" y2="3" stroke="#c9a55c" strokeWidth="1.5" />
            <Arc r={28.5} from={0} to={270} w={6} />
            <Arc r={20} from={-50} to={10} w={5} />
            <Arc r={20} from={30} to={255} w={5} />
            <Arc r={11.5} from={-70} to={175} w={5} />
            <Arc r={4} from={-90} to={90} w={3} />
          </svg>
        </div>
      </div>
    </div>
  );
}
